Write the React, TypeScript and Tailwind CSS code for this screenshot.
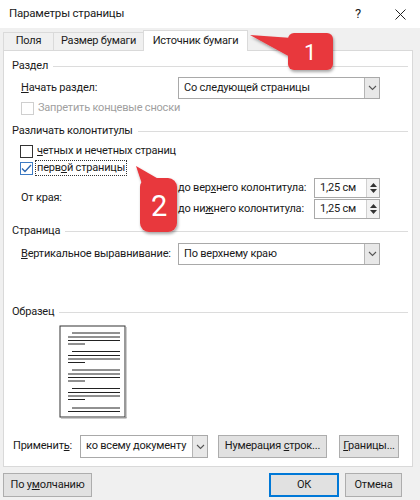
import React from 'react';

const font = { fontFamily: 'Roboto, "Noto Sans", sans-serif' };

const SectionHeader: React.FC<{ title: string; className?: string }> = ({ title, className = '' }) => (
  <div className={`flex items-center h-[16px] pl-[8px] pr-[4px] ${className}`}>
    <span className="text-[#1a1a1a]">{title}</span>
    <div className="flex-1 h-px bg-[#dcdcdc] ml-[5px]" />
  </div>
);

const Chevron: React.FC = () => (
  <svg width="9" height="6" viewBox="0 0 9 6">
    <path d="M1 1 L4.5 4.5 L8 1" fill="none" stroke="#555" strokeWidth="1.1" />
  </svg>
);

const Select: React.FC<{ value: string; className?: string }> = ({ value, className = '' }) => (
  <div className={`flex items-stretch h-[22px] border border-[#a9a9a9] bg-white ${className}`}>
    <div className="flex-1 flex items-center pl-[5px] overflow-hidden">{value}</div>
    <div className="w-[15px] flex items-center justify-center bg-[#e8e8e8] border-l border-[#b5b5b5]">
      <Chevron />
    </div>
  </div>
);

const Spin: React.FC<{ value: string }> = ({ value }) => (
  <div className="flex items-stretch w-[66px] h-[20px] border border-[#a9a9a9] bg-white">
    <div className="flex-1 flex items-center pl-[5px]">{value}</div>
    <div className="w-[13px] flex flex-col items-center justify-center gap-[2px] bg-[#f2f2f2] border-l border-[#d0d0d0]">
      <svg width="7" height="4" viewBox="0 0 7 4"><path d="M0 4 L3.5 0 L7 4 Z" fill="#333" /></svg>
      <svg width="7" height="4" viewBox="0 0 7 4"><path d="M0 0 L3.5 4 L7 0 Z" fill="#333" /></svg>
    </div>
  </div>
);

const Checkbox: React.FC<{ checked?: boolean; disabled?: boolean }> = ({ checked, disabled }) => (
  <div
    className={`w-[13px] h-[13px] border bg-white flex items-center justify-center shrink-0 ${
      disabled ? 'border-[#cfcfcf]' : checked ? 'border-[#3d7bc4]' : 'border-[#333]'
    }`}
  >
    {checked && (
      <svg width="11" height="9" viewBox="0 0 11 9">
        <path d="M1 4.5 L4 7.5 L10 1" fill="none" stroke="#2a65b0" strokeWidth="1.3" />
      </svg>
    )}
  </div>
);

const Button: React.FC<{ children: React.ReactNode; className?: string; primary?: boolean }> = ({
  children,
  className = '',
  primary,
}) => (
  <div
    className={`flex items-center justify-center h-[23px] bg-[#e1e1e1] shrink-0 ${
      primary ? 'border-2 border-[#0078d7]' : 'border border-[#adadad]'
    } ${className}`}
  >
    <span>{children}</span>
  </div>
);

const PagePreview: React.FC = () => {
  const groups = [332, 350.5, 369, 387.5];
  return (
    <svg width="68" height="94" viewBox="0 0 68 94">
      <rect x="1" y="1" width="65" height="91" fill="#fff" stroke="#333" strokeWidth="1" />
      <rect x="66" y="2" width="1.5" height="91" fill="#999" />
      <rect x="2" y="92" width="65.5" height="1.5" fill="#999" />
      {groups.map((g, i) => {
        const y = g - 324;
        return (
          <g key={i} stroke="#222" strokeWidth="1">
            <line x1="13" y1={y} x2="61" y2={y} />
            <line x1="9" y1={y + 4} x2="61" y2={y + 4} />
            <line x1="9" y1={y + 7.5} x2="61" y2={y + 7.5} />
            <line x1="9" y1={y + 11} x2="26" y2={y + 11} />
          </g>
        );
      })}
      <g stroke="#222" strokeWidth="1">
        <line x1="13" y1="83" x2="61" y2="83" />
        <line x1="9" y1="86.5" x2="61" y2="86.5" />
      </g>
    </svg>
  );
};

const Callouts: React.FC = () => (
  <svg className="absolute inset-0 pointer-events-none" width="420" height="500" viewBox="0 0 420 500">
    <defs>
      <filter id="sh" x="-30%" y="-30%" width="160%" height="160%">
        <feDropShadow dx="1" dy="2" stdDeviation="1.6" floodColor="#000" floodOpacity="0.35" />
      </filter>
    </defs>
    <g filter="url(#sh)" fill="#e8373d">
      <path d="M250 35 L292 38 L292 58 Z" />
      <rect x="288" y="33" width="45" height="37" rx="6" />
      <path d="M136 166 L162 181 L146 196 Z" />
      <rect x="140" y="178" width="37" height="54" rx="9" />
    </g>
    <text x="310" y="60" textAnchor="middle" fill="#fff" fontSize="22" fontFamily="Roboto, sans-serif">1</text>
    <text x="159" y="216" textAnchor="middle" fill="#fff" fontSize="29" fontFamily="Roboto, sans-serif">2</text>
  </svg>
);

export default function App() {
  return (
    <div
      className="relative w-[420px] h-[500px] overflow-hidden bg-[#f0f0f0] text-[11px] tracking-[-0.2px] text-[#1a1a1a] whitespace-nowrap"
      style={font}
    >
      {/* Title bar */}
      <div className="h-[28px] bg-white flex items-center pl-[9px] pr-[14px] text-[11.5px]">
        <span className="flex-1">Параметры страницы</span>
        <span className="w-[14px] text-center mr-[30px] text-[13px]">?</span>
        <svg width="11" height="11" viewBox="0 0 11 11">
          <path d="M0.5 0.5 L10.5 10.5 M10.5 0.5 L0.5 10.5" stroke="#222" strokeWidth="1" />
        </svg>
      </div>

      {/* Tabs */}
      <div className="h-[22px] flex items-end pl-[3px]">
        <div className="h-[18px] w-[50px] flex items-center justify-center border-t border-l border-[#dadada]">Поля</div>
        <div className="h-[18px] w-[90px] flex items-center justify-center border-t border-l border-[#dadada]">Размер бумаги</div>
        <div className="relative z-10 -mb-px h-[21px] w-[105px] flex items-center justify-center bg-white border border-b-0 border-[#dadada]">
          Источник бумаги
        </div>
      </div>

      {/* Panel */}
      <div className="mx-[3px] w-[410px] h-[417px] border border-[#d9d9d9] bg-white flex flex-col">
        <SectionHeader title="Раздел" className="mt-[7px]" />
        <div className="mt-[3px] flex items-center pl-[17px]">
          <span className="w-[157px] shrink-0"><u>Н</u>ачать раздел:</span>
          <Select value="Со следующей страницы" className="w-[202px]" />
        </div>
        <div className="mt-[2px] h-[14px] flex items-center pl-[17px] gap-[4px] text-[#a0a0a0]">
          <Checkbox disabled />
          <span>Запретить концевые сноски</span>
        </div>

        <SectionHeader title="Различать колонтитулы" className="mt-[8px]" />
        <div className="mt-[5px] h-[14px] flex items-center pl-[16px] gap-[4px]">
          <Checkbox />
          <span><u>ч</u>етных и нечетных страниц</span>
        </div>
        <div className="mt-[2px] h-[16px] flex items-center pl-[16px] gap-[2px]">
          <Checkbox checked />
          <span className="border border-dotted border-[#333] px-[1px] leading-[14px]">перв<u>о</u>й страницы</span>
        </div>
        <div className="mt-[2px] flex items-center pl-[17px]">
          <span className="w-[157px] shrink-0">От края:</span>
          <div className="flex flex-col gap-[1px]">
            <div className="flex items-center h-[20px]">
              <span className="w-[136px] shrink-0">до вер<u>х</u>него колонтитула:</span>
              <Spin value="1,25 см" />
            </div>
            <div className="flex items-center h-[20px]">
              <span className="w-[136px] shrink-0">до ни<u>ж</u>него колонтитула:</span>
              <Spin value="1,25 см" />
            </div>
          </div>
        </div>

        <SectionHeader title="Страница" className="mt-[4px]" />
        <div className="mt-[4px] flex items-center pl-[17px]">
          <span className="w-[157px] shrink-0"><u>В</u>ертикальное выравнивание:</span>
          <Select value="По верхнему краю" className="w-[202px]" />
        </div>

        <SectionHeader title="Образец" className="mt-[39px]" />
        <div className="mt-[5px] pl-[55px] h-[94px]">
          <PagePreview />
        </div>

        <div className="mt-[16px] flex items-center pl-[9px]">
          <span className="w-[67px] shrink-0">Применит<u>ь</u>:</span>
          <Select value="ко всему документу" className="w-[128px] h-[23px] shrink-0" />
          <Button className="ml-[10px] w-[109px]">Нумерация <u>с</u>трок...</Button>
          <Button className="ml-[12px] w-[60px]"><u>Г</u>раницы...</Button>
        </div>
      </div>

      {/* Footer */}
      <div className="mt-[6px] flex items-center pl-[3px]">
        <Button className="w-[89px] h-[24px]">По у<u>м</u>олчанию</Button>
        <div className="flex-1" />
        <Button primary className="w-[70px] h-[24px]">ОК</Button>
        <Button className="ml-[6px] mr-[18px] w-[57px] h-[24px]">Отмена</Button>
      </div>

      <Callouts />
    </div>
  );
}
